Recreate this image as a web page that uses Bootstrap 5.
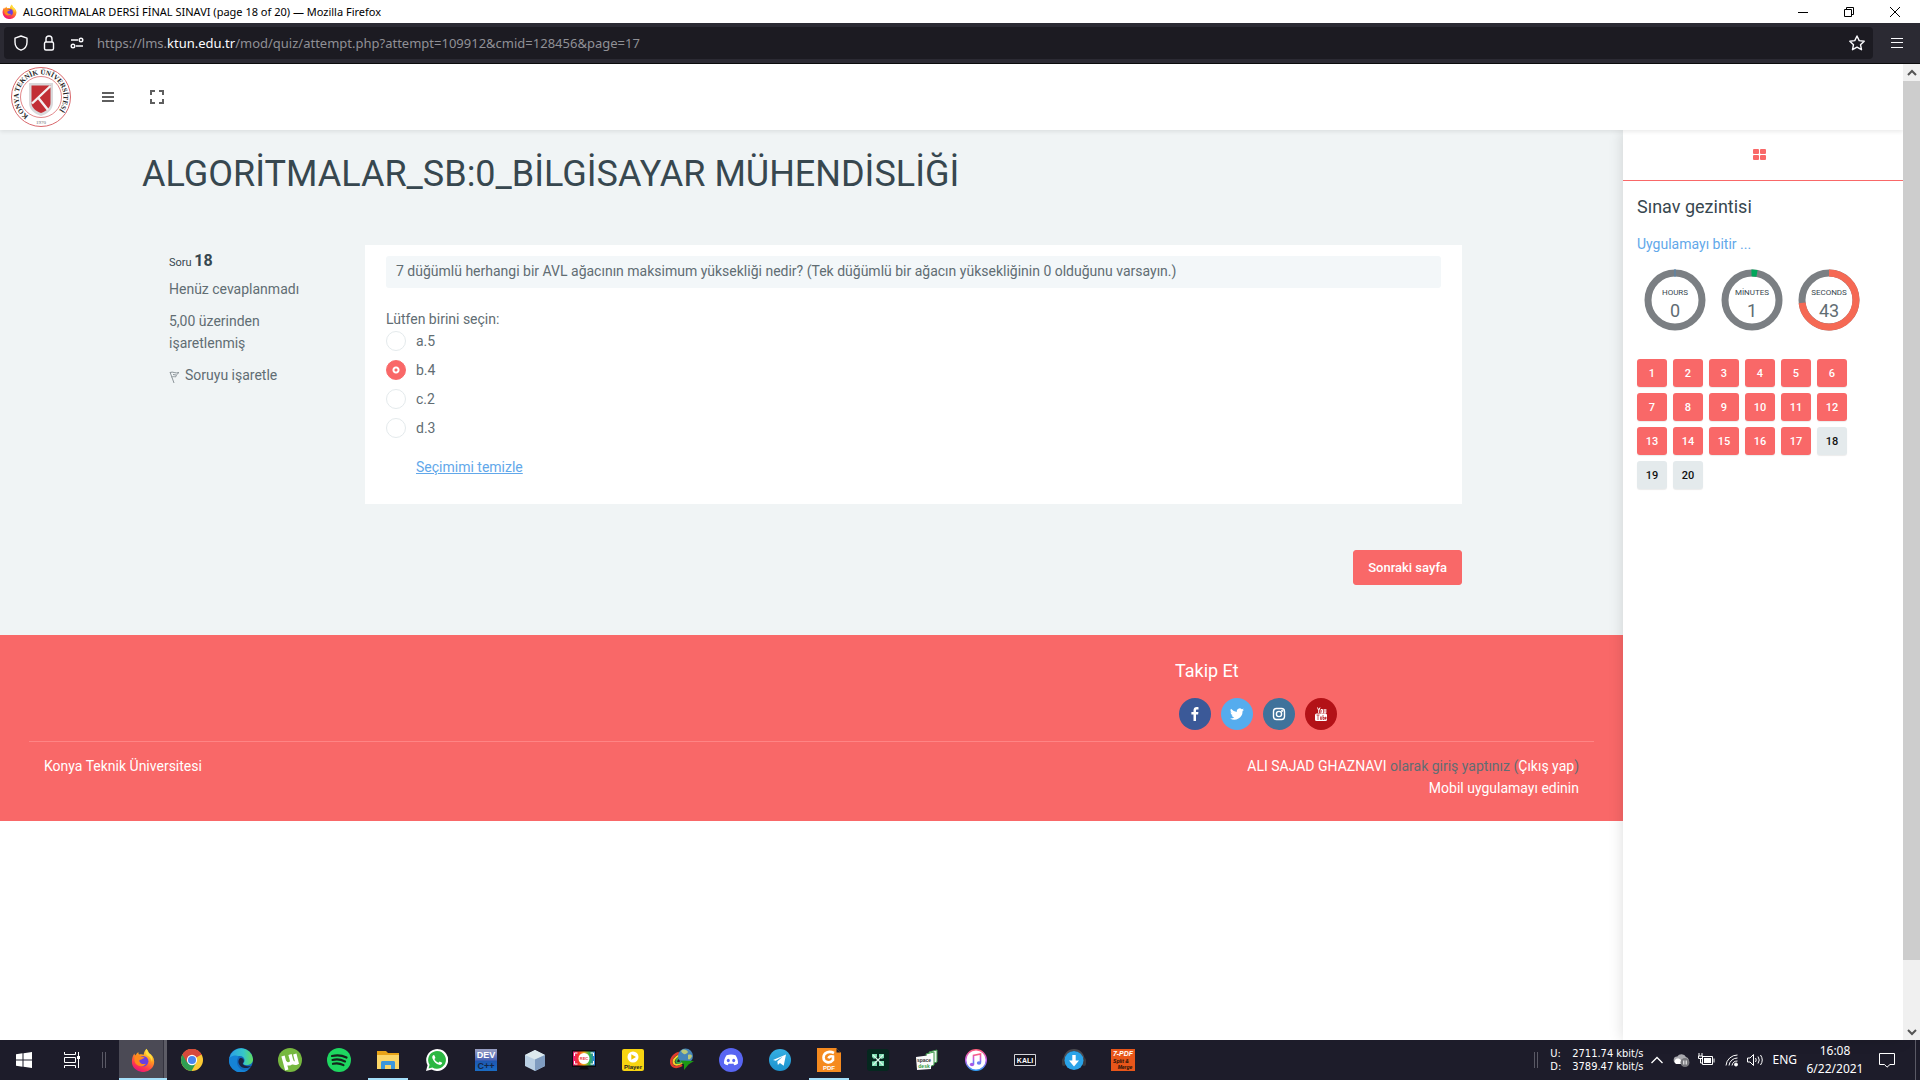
<!DOCTYPE html>
<html lang="tr">
<head>
<meta charset="utf-8">
<meta name="viewport" content="width=device-width, initial-scale=1">
<title>ALGORİTMALAR DERSİ FİNAL SINAVI (page 18 of 20)</title>
<link href="https://cdn.jsdelivr.net/npm/bootstrap@5.3.0/dist/css/bootstrap.min.css" rel="stylesheet">
<style>
:root { --coral: #f96868; --ink: #37474f; --text: #616d73; --sky: #62a8ea; }
body { font-family: Roboto, sans-serif; font-size: 14px; line-height: 22px; color: var(--text); background: #fff; }
svg { display: block; flex: none; }
.plain-btn { background: none; border: 0; padding: 0; color: inherit; }
.ui-font { font-family: "Noto Sans", "Open Sans", sans-serif; }
/* browser window */
.win-title { height: 23px; font-size: 11px; line-height: 22px; color: #000; padding: 0 2px 0 2px; }
.win-title span { margin-left: 6px; }
.win-btn { width: 46px; height: 23px; display: flex; align-items: center; justify-content: center; }
.win-tools { height: 41px; background: #2b2a33; border-bottom: 1px solid #0c0c0d; padding: 0 0 0 4px; color: #fbfbfe; }
.address { height: 32px; background: #1c1b22; border-radius: 4px; padding: 0 7px 0 9px; font-size: 13px; color: #909096; gap: 12px; }
.address strong { color: #fbfbfe; font-weight: 400; }
.menu-btn { width: 47px; height: 32px; display: flex; align-items: center; justify-content: center; }
/* page */
.site-head { height: 66px; padding-left: 11px; color: #5e5e5e; position: relative; z-index: 3; background: #fff; box-shadow: 0 2px 4px rgba(0,0,0,.08); }
.quiz-main { background: #f0f4f5; padding: 24px 161px 50px 142px; }
.quiz-main h1 { font-size: 36px; line-height: 40px; font-weight: 400; color: var(--ink); margin: 0 0 51px; }
.question { padding-left: 19px; }
.q-info { width: 204px; flex: none; padding: 5px 50px 0 8px; }
.q-info p { margin: 0 0 10px; }
.q-info h2 { font-size: 11px; line-height: 22px; font-weight: 400; color: var(--ink); margin: 0 0 4px; }
.q-info h2 b { font-size: 16px; }
.q-body { background: #fff; padding: 11px 21px 26px; }
.q-text { background: #f3f7f9; border-radius: 3px; padding: 4px 10px 6px; margin-bottom: 20px; }
.answer { display: flex; align-items: center; gap: 10px; margin-bottom: 7px; }
.answer .form-check-input { width: 20px; height: 20px; margin: 0; border: 1px solid #e4eaec; background-image: none; }
.answer .form-check-input:checked { border-color: var(--coral); background: radial-gradient(circle, var(--coral) 0 1px, #fff 2px 3px, var(--coral) 4px); }
.clear-link { display: inline-block; margin: 10px 0 0 30px; color: var(--sky); }
.next-btn { margin-top: 46px; height: 35px; padding: 0 14px; font-size: 13px; font-weight: 500; line-height: 22px; color: #fff; background: var(--coral); border: 1px solid var(--coral); border-radius: 3px; }
.site-foot { background: var(--coral); padding: 25px 29px 22px; }
.site-foot a { color: #fff; text-decoration: none; }
.follow { width: 419px; }
.follow h3 { font-size: 18px; line-height: 22px; font-weight: 400; color: #fff; margin: 0 0 16px; }
.social { display: flex; width: 32px; height: 32px; border-radius: 50%; align-items: center; justify-content: center; }
.foot-line { border-top: 1px solid #ff8484; margin-top: 11px; padding: 13px 15px 0; }
/* side panel */
.side { width: 280px; flex: none; background: #fff; box-shadow: 0 0 14px rgba(0,0,0,.14); position: relative; z-index: 2; }
.side-tab { height: 51px; border-bottom: 1px solid var(--coral); display: flex; justify-content: center; padding: 17px 7px 0 0; }
.side-body { padding: 15px 14px; }
.side-body h2 { font-size: 18px; line-height: 22px; font-weight: 400; color: var(--ink); margin: 0 0 15px; }
.side-body .finish { color: var(--sky); text-decoration: none; }
.dials { gap: 15px; margin: 14px 0 28px 7px; }
.dials text { font-family: Roboto, sans-serif; text-anchor: middle; }
.q-nav { display: flex; flex-wrap: wrap; gap: 6px; }
.q-nav a { width: 30px; height: 28px; border-radius: 3px; font-size: 11px; font-weight: 500; line-height: 29px; text-align: center; text-decoration: none; color: #fff; background: var(--coral); box-shadow: 0 1px 1px rgba(0,0,0,.08); }
.q-nav a.todo { color: #111; background: #e4eaec; }
.scroller { width: 17px; flex: none; background: #f0f0f0; position: relative; z-index: 4; }
.scroller button { height: 17px; width: 17px; display: flex; align-items: center; justify-content: center; }
.thumb { flex: 879 0 0; background: #cdcdcd; }
.track { flex: 63 0 0; }
/* taskbar */
.taskbar { height: 40px; flex: none; background: #1d1c2a; color: #fff; }
.tb { width: 49px; height: 40px; padding-right: 1px; position: relative; display: flex; align-items: center; justify-content: center; }
.tb-sys { width: 48px; padding-right: 0; }
.tb.active { background: linear-gradient(90deg, #4b4a55 44px, #34333f 44px 45px, #5d5c66 45px 48px, transparent 48px); }
.tb.open::after { content: ""; position: absolute; bottom: 0; left: 4px; width: 40px; height: 2px; background: #a5e0fa; }
.tb.active::after { left: 0; width: 48px; }
.grip { width: 4px; height: 16px; border: solid #5a5965; border-width: 0 1px; }
.speed { font-family: "DejaVu Sans Condensed", "DejaVu Sans", sans-serif; font-size: 11px; line-height: 13px; gap: 11px; }
.clock { font-size: 12px; line-height: 18px; text-align: center; width: 60px; }
.desk-edge { width: 5px; height: 40px; border-left: 1px solid #5a5965; }
.brand-text { font-family: "Liberation Sans", sans-serif; font-weight: 700; text-anchor: middle; }
</style>
<script src="https://cdn.jsdelivr.net/npm/bootstrap@5.3.0/dist/js/bootstrap.bundle.min.js"></script>
</head>
<body class="d-flex flex-column vh-100 overflow-hidden">
<svg width="0" height="0" class="position-absolute" aria-hidden="true">
  <defs>
    <linearGradient id="fxA" x1="0.8" y1="0" x2="0.3" y2="1"><stop offset="0" stop-color="#fff04a"/><stop offset=".4" stop-color="#ff9a1f"/><stop offset=".75" stop-color="#ff3b4c"/><stop offset="1" stop-color="#e8107c"/></linearGradient>
    <linearGradient id="edA" x1="0" y1="0" x2="1" y2="0"><stop offset="0" stop-color="#2b9fe6"/><stop offset=".6" stop-color="#36c6c9"/><stop offset="1" stop-color="#62de5c"/></linearGradient>
    <linearGradient id="itA" x1="0" y1="0" x2="0" y2="1"><stop offset="0" stop-color="#ff5e7c"/><stop offset=".5" stop-color="#c25bea"/><stop offset="1" stop-color="#2f9bf5"/></linearGradient>
    <linearGradient id="dvA" x1="0" y1="0" x2="0" y2="1"><stop offset="0" stop-color="#9aa0c4"/><stop offset=".5" stop-color="#4a63b4"/><stop offset=".55" stop-color="#1e57b0"/><stop offset="1" stop-color="#1a6cc4"/></linearGradient>
    <linearGradient id="rcA" x1="0" y1="0" x2="1" y2="0"><stop offset="0" stop-color="#e81c7c"/><stop offset=".25" stop-color="#f5372a"/><stop offset=".5" stop-color="#f7b316"/><stop offset=".75" stop-color="#2fb14c"/><stop offset="1" stop-color="#2c79e6"/></linearGradient>
    <linearGradient id="tgA" x1="0" y1="0" x2="0" y2="1"><stop offset="0" stop-color="#35afe3"/><stop offset="1" stop-color="#1c92cd"/></linearGradient>
    <symbol id="fox" viewBox="0 0 24 24">
      <path d="M15.500 .8c1.200 1.600 1.800 3 2.400 4.300 3 1.700 5.300 4.700 5.300 8.600a11.100 10.300 0 0 1-22.300 0c0-3.500 1-6.300 2.600-8.200.1 1 .3 1.600.7 2.200C5.200 6 6.300 4.800 7.400 4c-.1 1 .1 1.900.6 2.600 1.800-.6 3.400-.4 4.700.2.2-2.200 1.200-4.500 2.800-6z" fill="url(#fxA)"/>
      <circle cx="12.200" cy="13.300" r="5.200" fill="#6a3fe0"/>
      <path d="M4 7.500c2.500-.8 4.500-.1 5.800 1.300 1.600-.2 3 .2 3.900.9-1.500.3-3 1.700-4.500 2.100-1 .3-1 1.400-.3 2.400C10 16 12.500 16.600 15 15.700c-1.800 2.800-6.500 3.600-9.400.9C3.100 14.300 3 10.500 4 7.500z" fill="#ff8a1c"/>
      <path d="M15.500 1c1.200 1.600 1.800 3 2.400 4.300C20.500 7 22 10 21 14c-.4-3-2-5.500-5-6.800-1.500-1.800-1.600-4-.5-6.200z" fill="#ffdf3d"/>
    </symbol>
    <symbol id="up" viewBox="0 0 10 10"><path d="M1 7l4-4 4 4" fill="none" stroke="#555" stroke-width="2"/></symbol>
  </defs>
</svg>

<!-- window title -->
<div class="win-title ui-font d-flex align-items-center">
  <svg width="15" height="15"><use href="#fox"/></svg>
  <span class="flex-grow-1">ALGORİTMALAR DERSİ FİNAL SINAVI (page 18 of 20) — Mozilla Firefox</span>
  <button class="plain-btn win-btn" aria-label="Minimize"><svg width="10" height="10"><path d="M0 5.500h10" stroke="#000"/></svg></button>
  <button class="plain-btn win-btn" aria-label="Restore"><svg width="10" height="10" fill="none" stroke="#000"><path d="M.5 2.500h7v7h-7zM2.500 2.500v-2h7v7h-2"/></svg></button>
  <button class="plain-btn win-btn" aria-label="Close"><svg width="10" height="10"><path d="M0 0l10 10M10 0L0 10" stroke="#000"/></svg></button>
</div>

<!-- address bar -->
<div class="win-tools d-flex align-items-center">
  <div class="address ui-font d-flex align-items-center flex-grow-1">
    <svg width="16" height="16" fill="none" stroke="#fbfbfe" stroke-width="1.400"><path d="M8 1l6 2.200v4c0 4-2.700 6.800-6 8-3.300-1.200-6-4-6-8v-4z" stroke-linejoin="round"/></svg>
    <svg width="16" height="16" fill="none" stroke="#fbfbfe" stroke-width="1.400"><path d="M5 7V4a3 3 0 0 1 6 0v3"/><rect x="3.500" y="7" width="9" height="8" rx="1.500"/></svg>
    <svg width="16" height="16" fill="none" stroke="#fbfbfe" stroke-width="1.400"><path d="M2 5h7M7 11h7"/><circle cx="12" cy="5" r="1.800"/><circle cx="4" cy="11" r="1.800"/></svg>
    <span class="flex-grow-1">https://lms.<strong>ktun.edu.tr</strong>/mod/quiz/attempt.php?attempt=109912&amp;cmid=128456&amp;page=17</span>
    <button class="plain-btn" aria-label="Bookmark"><svg width="18" height="18" fill="none" stroke="#fbfbfe" stroke-width="1.400" stroke-linejoin="round"><path d="M9 2l2.200 4.600 5 .6-3.700 3.500 1 5L9 13.200l-4.500 2.500 1-5L1.800 7.200l5-.6z"/></svg></button>
  </div>
  <button class="plain-btn menu-btn" aria-label="Menu"><svg width="12" height="10" stroke="#fbfbfe"><path d="M0 .5h12M0 4.500h12M0 9.500h12"/></svg></button>
</div>

<div class="d-flex flex-grow-1" style="min-height:0">
  <div class="d-flex flex-column flex-grow-1">
    <header class="site-head d-flex align-items-center">
      <a href="#" aria-label="Konya Teknik Üniversitesi">
        <svg width="61" height="62" viewBox="0 0 61 62">
          <circle cx="30" cy="31" r="29.500" fill="#fff" stroke="#d9686c" stroke-width="1"/>
          <circle cx="30" cy="31" r="20.500" fill="none" stroke="#d9686c" stroke-width=".8"/>
          <path id="seal" d="M17.500 49.700A22.500 22.500 0 1 1 40 51.100" fill="none"/>
          <text font-family="Liberation Serif, serif" font-weight="700" font-size="7" fill="#222"><textPath href="#seal">KONYA TEKNİK ÜNİVERSİTESİ</textPath></text>
          <text x="30" y="58" text-anchor="middle" font-family="Liberation Serif, serif" font-size="5" fill="#666">1970</text>
          <path d="M18 17h24v20c0 6-5 11-12 13-7-2-12-7-12-13z" fill="#d9d9db"/>
          <path d="M20.500 19.500h19v17.500c0 4.500-4 8-9.500 10-5.500-2-9.500-5.500-9.500-10z" fill="#c22f35"/>
          <path d="M21 37.500L39.500 20M27 31.500L37 44" stroke="#f4f0f0" stroke-width="2.400"/>
        </svg>
      </a>
      <button class="plain-btn" style="margin-left:30px" aria-label="Menü"><svg width="12" height="10" stroke="#5e5e5e" stroke-width="2"><path d="M0 1h12M0 5h12M0 9h12"/></svg></button>
      <button class="plain-btn" style="margin-left:36px" aria-label="Tam ekran"><svg width="14" height="14" fill="none" stroke="#5e5e5e" stroke-width="2"><path d="M1 5V1h4M9 1h4v4M13 9v4H9M5 13H1V9"/></svg></button>
    </header>
    <div class="d-flex flex-grow-1">
      <div class="flex-grow-1">
        <main class="quiz-main">
          <h1>ALGORİTMALAR_SB:0_BİLGİSAYAR MÜHENDİSLİĞİ</h1>
          <form class="question">
            <div class="d-flex">
              <div class="q-info">
                <h2>Soru <b>18</b></h2>
                <p class="text-nowrap">Henüz cevaplanmadı</p>
                <p>5,00 üzerinden işaretlenmiş</p>
                <button type="button" class="plain-btn d-flex align-items-center text-nowrap gap-1"><svg width="12" height="12" class="mt-1" fill="none" stroke="#8b9499"><path d="M1 1l4 11M1 1.500c3-1.500 5 1.500 9 0-2 1-2.500 3-3.500 4.500-1.500-.5-2.500-.5-4 0M4 3.500l3 .5"/></svg>Soruyu işaretle</button>
              </div>
              <div class="q-body flex-grow-1">
                <div class="q-text">7 düğümlü herhangi bir AVL ağacının maksimum yüksekliği nedir? (Tek düğümlü bir ağacın yüksekliğinin 0 olduğunu varsayın.)</div>
                <div>Lütfen birini seçin:</div>
                <div class="answer"><input class="form-check-input" type="radio" name="q" id="qa"><label for="qa">a.5</label></div>
                <div class="answer"><input class="form-check-input" type="radio" name="q" id="qb" checked><label for="qb">b.4</label></div>
                <div class="answer"><input class="form-check-input" type="radio" name="q" id="qc"><label for="qc">c.2</label></div>
                <div class="answer"><input class="form-check-input" type="radio" name="q" id="qd"><label for="qd">d.3</label></div>
                <a href="#" class="clear-link">Seçimimi temizle</a>
              </div>
            </div>
            <div class="d-flex justify-content-end"><button type="button" class="next-btn">Sonraki sayfa</button></div>
          </form>
        </main>
        <footer class="site-foot">
          <div class="d-flex justify-content-end">
            <div class="follow">
              <h3>Takip Et</h3>
              <div class="d-flex ms-1" style="gap:10px">
                <a href="#" class="social" style="background:#3b5998" aria-label="Facebook"><svg width="14" height="14" fill="#fff"><path d="M10.500.2v2.200H9.200c-1 0-1.200.5-1.200 1.200v1.500h2.400L10.100 7.500H8V14H5.500V7.500H3.400V5.100h2.100V3.300C5.500 1.200 6.800 0 8.700 0c.9 0 1.600.1 1.800.2z"/></svg></a>
                <a href="#" class="social" style="background:#55acee" aria-label="Twitter"><svg width="14" height="14" viewBox="0 0 24 24" fill="#fff"><path d="M24 4.600a10 10 0 0 1-2.800.8 5 5 0 0 0 2.100-2.700 10 10 0 0 1-3.100 1.200 4.900 4.900 0 0 0-8.400 4.500A14 14 0 0 1 1.700 3.200a4.900 4.900 0 0 0 1.500 6.500 5 5 0 0 1-2.200-.6 4.900 4.900 0 0 0 3.900 4.900 5 5 0 0 1-2.200.1 4.900 4.900 0 0 0 4.600 3.400A9.900 9.900 0 0 1 0 19.500 14 14 0 0 0 21.500 7.100 10 10 0 0 0 24 4.600z"/></svg></a>
                <a href="#" class="social" style="background:#3f729b" aria-label="Instagram"><svg width="14" height="14" fill="none" stroke="#fff" stroke-width="1.400"><rect x="1.500" y="1.500" width="11" height="11" rx="3"/><circle cx="7" cy="7" r="2.600"/><circle cx="10.200" cy="3.900" r=".4"/></svg></a>
                <a href="#" class="social" style="background:#b31217" aria-label="YouTube"><svg width="14" height="14"><path d="M3.500.5l1.200 3v2.500M6 .5L4.700 3.500M7 2.500v3.500h1.500V2.500zM10.200 2v4h1.600V2" fill="none" stroke="#fff"/><rect x="1" y="6.500" width="12" height="7.500" rx="1.500" fill="#fff"/><path d="M2.500 8h3M4 8v5M6.500 9.500v3h1.200v-3M9 8v4.500h1.200v-2H9M11.200 10.200h1v1.300h-1zv2h1" fill="none" stroke="#b31217" stroke-width=".7"/></svg></a>
              </div>
            </div>
          </div>
          <div class="foot-line d-flex justify-content-between">
            <a href="#">Konya Teknik Üniversitesi</a>
            <div class="text-end">
              <div><a href="#">ALI SAJAD GHAZNAVI</a> olarak giriş yaptınız (<a href="#">Çıkış yap</a>)</div>
              <a href="#">Mobil uygulamayı edinin</a>
            </div>
          </div>
        </footer>
      </div>
      <aside class="side">
        <div class="side-tab"><svg width="14" height="14" fill="#f96868"><rect y="2" width="6" height="5" rx="1"/><rect x="7" y="2" width="6" height="5" rx="1"/><rect y="8" width="6" height="5" rx="1"/><rect x="7" y="8" width="6" height="5" rx="1"/></svg></div>
        <div class="side-body">
          <h2>Sınav gezintisi</h2>
          <a href="#" class="finish">Uygulamayı bitir ...</a>
          <div class="dials d-flex">
            <svg width="62" height="62"><circle cx="31" cy="31" r="27" fill="none" stroke="#7b7f83" stroke-width="7"/><path d="M31 0v8" stroke="#4f87b8"/><text x="31" y="26" font-size="8" fill="#37474f">HOURS</text><text x="31" y="48" font-size="18" fill="#616d73">0</text></svg>
            <svg width="62" height="62"><circle cx="31" cy="31" r="27" fill="none" stroke="#7b7f83" stroke-width="7"/><path d="M30.500 4a27 27 0 0 1 5.500.400" fill="none" stroke="#00a65a" stroke-width="7"/><text x="31" y="26" font-size="8" fill="#37474f">MİNUTES</text><text x="31" y="48" font-size="18" fill="#616d73">1</text></svg>
            <svg width="62" height="62"><circle cx="31" cy="31" r="27" fill="none" stroke="#7b7f83" stroke-width="7"/><path d="M31 4a27 27 0 1 1-26.900 29.800" fill="none" stroke="#f56954" stroke-width="7"/><text x="31" y="26" font-size="8" fill="#37474f">SECONDS</text><text x="31" y="48" font-size="18" fill="#616d73">43</text></svg>
          </div>
          <nav class="q-nav" style="width:212px" aria-label="Sorular">
            <a href="#">1</a><a href="#">2</a><a href="#">3</a><a href="#">4</a><a href="#">5</a><a href="#">6</a>
            <a href="#">7</a><a href="#">8</a><a href="#">9</a><a href="#">10</a><a href="#">11</a><a href="#">12</a>
            <a href="#">13</a><a href="#">14</a><a href="#">15</a><a href="#">16</a><a href="#">17</a><a href="#" class="todo">18</a>
            <a href="#" class="todo">19</a><a href="#" class="todo">20</a>
          </nav>
        </div>
      </aside>
    </div>
  </div>
  <div class="scroller d-flex flex-column">
    <button class="plain-btn" aria-label="Scroll up"><svg width="10" height="10"><use href="#up"/></svg></button>
    <div class="thumb"></div><div class="track"></div>
    <button class="plain-btn" aria-label="Scroll down"><svg width="10" height="10" style="transform:rotate(180deg)"><use href="#up"/></svg></button>
  </div>
</div>

<!-- taskbar -->
<div class="taskbar ui-font d-flex align-items-center">
  <button class="plain-btn tb tb-sys" aria-label="Start"><svg width="16" height="16" fill="#fff"><path d="M0 2.200L6.500 1.300V7.500H0zM7.500 1.200L16 0v7.500H7.500zM0 8.500h6.500v6.200L0 13.800zM7.500 8.500H16V16l-8.500-1.200z"/></svg></button>
  <button class="plain-btn tb tb-sys" aria-label="Task view"><svg width="17" height="16" fill="none" stroke="#fff"><path d="M.5 0v2.500h11V0M.5 5.500h11v5h-11zM.5 16v-2.500h11V16M14.500 0v16"/><path d="M13 4h3v3h-3z" fill="#fff" stroke="none"/></svg></button>
  <div class="d-flex" style="width:23px;padding-left:6px"><span class="grip"></span></div>
  <button class="plain-btn tb open active" aria-label="Firefox"><svg width="24" height="24"><use href="#fox"/></svg></button>
  <button class="plain-btn tb" aria-label="Chrome"><svg width="22" height="22" viewBox="0 0 24 24"><circle cx="12" cy="12" r="12" fill="#fbc934"/><path d="M12 12L1.600 6A12 12 0 0 1 22.400 6z" fill="#d64a3c"/><path d="M1.600 6A12 12 0 0 0 11.500 24l5.200-9.300L12 12z" fill="#2f9e52"/><path d="M12 6.500h10.600A12 12 0 0 0 1.600 6l5.200 9z" fill="#d64a3c"/><circle cx="12" cy="12" r="5.600" fill="#fff"/><circle cx="12" cy="12" r="4.400" fill="#4a86ee"/></svg></button>
  <button class="plain-btn tb" aria-label="Edge"><svg width="24" height="24"><circle cx="12" cy="12" r="12" fill="#1269bd"/><path d="M.3 10A12 12 0 0 1 24 11c.2 3.500-2.300 6-6 6-3 0-4.500-1.200-3.200-2.600 2-2.400.2-6.400-4.300-6.400C5 8 1 10.500.3 10z" fill="url(#edA)"/><path d="M10 8.500c-3 3-3 9 1.500 12.500 2.500 1.800 6 1.900 9.500-.7A12 12 0 0 1 .1 10.500C3 7 7 7 10 8.500z" fill="#1583d6"/><path d="M10.500 10.500c-2.500 3-.5 8 4 9.300 3 .8 6-.2 8-1.800-3 .5-6.500.3-8.300-1.500-.8-.8-.2-1.600.3-2.300.6-1 .5-2.500-.5-3.500-1-.8-2.500-.9-3.500-.2z" fill="#1c2140"/></svg></button>
  <button class="plain-btn tb" aria-label="uTorrent"><svg width="24" height="24"><circle cx="12" cy="12" r="12" fill="#76b83f"/><path d="M5 8l3.800 14M6.800 13.500c1 3 6 3.500 7-.2L12 6.500M13.500 12c.8 3 3 3.800 5.500 2.800L16.800 6" fill="none" stroke="#fff" stroke-width="3.400"/></svg></button>
  <button class="plain-btn tb" aria-label="Spotify"><svg width="24" height="24"><circle cx="12" cy="12" r="12" fill="#1ed760"/><path d="M5 8c5-1.300 10-.8 14.500 1.500M5.500 12c4.200-1.200 8.500-.6 12.500 1.400M6 15.800c3.800-.9 7-.6 10.500 1.300" fill="none" stroke="#14231b" stroke-width="2.200" stroke-linecap="round"/></svg></button>
  <button class="plain-btn tb open" aria-label="Explorer"><svg width="22" height="20"><path d="M0 1h9l2 2h11v15H0z" fill="#e8a317"/><path d="M0 5h22v14H0z" fill="#fcd667"/><path d="M4 19v-6.500c0-1 .7-1.500 1.500-1.500h11c.8 0 1.500.5 1.500 1.500V19h-4v-4H8v4z" fill="#3d97dc"/></svg></button>
  <button class="plain-btn tb" aria-label="WhatsApp"><svg width="22" height="22" viewBox="0 0 24 24"><path d="M0 24l1.700-6.200A12 12 0 1 1 6.200 22.400z" fill="#fff"/><path d="M2.800 21.200l1.100-4A9.700 9.700 0 1 1 7 20.200z" fill="#2cb742"/><path d="M8.500 6.500c-1.500.5-2 2-1.500 3.500 1.200 3.500 4 6.300 7.500 7.300 1.500.3 3-.5 3.200-2.300l-2.800-1.400-1.400 1.500c-2-.8-3.500-2.300-4.300-4.100l1.100-1.300-1-2.700z" fill="#fff"/></svg></button>
  <button class="plain-btn tb" aria-label="Dev C++"><svg width="22" height="22"><path d="M0 0h22v22H0z" fill="url(#dvA)"/><text class="brand-text" x="11" y="9" font-size="9" fill="#fff">DEV</text><text class="brand-text" x="11" y="20" font-size="9" fill="#152543">C++</text></svg></button>
  <button class="plain-btn tb" aria-label="VirtualBox"><svg width="22" height="22"><path d="M11 1l10 5v11l-10 5L1 17V6z" fill="#b9cfe3"/><path d="M11 1l10 5-10 4.500L1 6z" fill="#dce9ee"/><path d="M11 10.500L21 6v11l-10 5z" fill="#7f9cc0"/></svg></button>
  <button class="plain-btn tb" aria-label="Recorder"><svg width="24" height="20"><path d="M0 0h24v17H0z" fill="#0b0b10"/><path d="M7 19.500h10l-2-3H9z" fill="#0b0b10"/><path d="M1 1.500h22v14H1z" fill="url(#rcA)"/><path d="M2.500 6V3h3M18.500 3h3v3M21.500 11v3h-3M5.500 14h-3v-3" fill="none" stroke="#fff"/><circle cx="12" cy="8.500" r="5.500" fill="#fff"/><text class="brand-text" x="12" y="10" font-size="4" fill="#e8343a">REC</text></svg></button>
  <button class="plain-btn tb" aria-label="Player"><svg width="22" height="22"><rect width="22" height="22" rx="2" fill="#f7d411"/><circle cx="11" cy="8" r="5.500" fill="#fff"/><path d="M9.300 5.200L14 8l-4.700 2.800z" fill="#f0c400"/><text class="brand-text" x="11" y="20" font-size="6" fill="#222">Player</text></svg></button>
  <button class="plain-btn tb" aria-label="IDM"><svg width="24" height="24"><path d="M9 5C2 7-1 14 3 18c2 1.500 6 1 9-1" fill="none" stroke="#e23b2c" stroke-width="2.500"/><path d="M10 7C5 9 2 13 4.500 16c1.500 1 5 .5 8-1.500" fill="none" stroke="#f6cf2b" stroke-width="2"/><path d="M10 9c-3 1.500-4.500 4-3.500 5.500 1 .8 3 .5 5-.5" fill="none" stroke="#38a94a" stroke-width="2"/><circle cx="15.500" cy="8" r="7.500" fill="#4585b8"/><path d="M11 3c3-3 6-1 7 1-2 3-5 3-7-1zM18 7c2-1 4 0 4 1-1 3-3 4-4 3z" fill="#b9c97a"/><path d="M10 12.500l14 .5-5.500 3.500L14 22v-5.500z" fill="#1c9a14"/></svg></button>
  <button class="plain-btn tb" aria-label="Discord"><svg width="24" height="24"><circle cx="12" cy="12" r="12" fill="#5865f2"/><path d="M7.500 7.200c3-1 6-1 9 0 1.800 2.600 2.700 5.400 2.500 8.300-1.200 1-2.400 1.500-3.700 1.700l-1-1.600c-1.600.3-3 .3-4.600 0l-1 1.600c-1.300-.2-2.500-.7-3.700-1.700-.2-2.900.7-5.700 2.500-8.300z" fill="#fff"/><ellipse cx="9.300" cy="12.500" rx="1.500" ry="1.700" fill="#5865f2"/><ellipse cx="14.700" cy="12.500" rx="1.500" ry="1.700" fill="#5865f2"/></svg></button>
  <button class="plain-btn tb" aria-label="Telegram"><svg width="22" height="22"><circle cx="11" cy="11" r="11" fill="url(#tgA)"/><path d="M4 11l13-5.500-2.300 11.300-3.800-2.800-2 2-.6-3.600 5.500-5-7 4.300z" fill="#fff"/></svg></button>
  <button class="plain-btn tb open" aria-label="PDF"><svg width="24" height="24"><path d="M0 0h19l5 5v19H0z" fill="#f58a1f"/><path d="M19 0v5h5" fill="#1d1c2a" stroke="#f58a1f"/><path d="M17 5c-5-2.500-10.500-.5-10.500 4.500 0 5 6.500 6.500 9.500 2.500V8.500c-2-.8-4 0-4.500 1.800" fill="none" stroke="#fff" stroke-width="2.600"/><text class="brand-text" x="12" y="22" font-size="6" fill="#fff">PDF</text></svg></button>
  <button class="plain-btn tb" aria-label="Editor"><svg width="22" height="22"><rect width="22" height="22" rx="3" fill="#05281f"/><path d="M5 5h5v3l-3 2-2-2zM12 5h5v4l-2.500 1-2.500-2zM5 12.500l4-.5 1 2v3H5zM12 12h5v5h-5z" fill="#7fe0b4"/><path d="M6 6l10 10M16 6L6 16" stroke="#d9f7ea" stroke-width="1.200"/></svg></button>
  <button class="plain-btn tb" aria-label="Spacedesk"><svg width="24" height="22"><path d="M14 3l8-2v12l-6 2z" fill="#e8f3e8" stroke="#3f9a4c"/><path d="M11 5l8-2v13l-5 2z" fill="#fff" stroke="#3f9a4c"/><path d="M1 8l15-2v14L2 21z" fill="#fafafa"/><text class="brand-text" x="9" y="13" font-size="5" fill="#333">space</text><text class="brand-text" x="9" y="19" font-size="5" fill="#2f9a45">desk</text></svg></button>
  <button class="plain-btn tb" aria-label="iTunes"><svg width="22" height="22"><circle cx="11" cy="11" r="10.300" fill="#fff" stroke="url(#itA)" stroke-width="1.400"/><path d="M8.500 15V6.500L15.500 5v8.500" fill="none" stroke="url(#itA)" stroke-width="1.600"/><ellipse cx="7" cy="15.500" rx="2.200" ry="1.700" fill="#a55bea"/><ellipse cx="14" cy="14" rx="2.200" ry="1.700" fill="#6a7bf0"/></svg></button>
  <button class="plain-btn tb" aria-label="Kali"><svg width="22" height="12"><path d="M.5 .5h21v11H.500z" fill="#15141f" stroke="#d5d5da"/><text class="brand-text" x="11" y="9" font-size="7" fill="#fff">KALI</text></svg></button>
  <button class="plain-btn tb" aria-label="Downloader"><svg width="24" height="22"><path d="M2 13C2-3 22-3 22 13" fill="none" stroke="#4b4b50" stroke-width="2"/><rect y="9" width="4" height="8" rx="2" fill="#3a3a3e"/><rect x="20" y="9" width="4" height="8" rx="2" fill="#3a3a3e"/><circle cx="12" cy="11.500" r="9.500" fill="#2aa3e8"/><path d="M10.300 6h3.400v5.500H17l-5 6-5-6h3.300z" fill="#fff"/></svg></button>
  <button class="plain-btn tb" aria-label="7-PDF"><svg width="24" height="24"><path d="M0 1h24v22H0z" fill="#e8561a"/><g font-style="italic"><text class="brand-text" x="12" y="8" font-size="7" fill="#fff">7-PDF</text><text class="brand-text" x="10" y="15" font-size="5" fill="#201008">Split &amp;</text><text class="brand-text" x="14" y="21" font-size="5" fill="#201008">Merge</text></g></svg></button>

  <div class="d-flex align-items-center ms-auto">
    <span class="grip"></span>
    <div class="speed d-flex" style="margin-left:12px"><div>U:<br>D:</div><div>2711.74 kbit/s<br>3789.47 kbit/s</div></div>
    <button class="plain-btn" style="margin-left:8px" aria-label="Hidden icons"><svg width="12" height="8" fill="none" stroke="#fff" stroke-width="1.300"><path d="M.5 7L6 1.500 11.500 7"/></svg></button>
    <svg width="17" height="14" style="margin-left:10px"><path d="M4 10.500a3.500 3.500 0 0 1 .3-7A5 5 0 0 1 13 4a3.500 3.500 0 0 1 1 6.500z" fill="#a9a9ae"/><path d="M3 11a3 3 0 0 1 0-5c2-1 4 0 5 1v4z" fill="#fff"/><circle cx="12" cy="9.500" r="4.500" fill="#77777c"/><path d="M10.800 7.500v4M13.200 7.500v4" stroke="#fff"/></svg>
    <svg width="17" height="14" style="margin-left:8px" fill="none" stroke="#fff"><path d="M4.500 3.500h10v8h-10zM16 5.500v4M1 0v3M4 0v3M.5 3h4v2.500h-4zM2.500 5v5h2"/><path d="M6 5h7v5H6z" fill="#fff" stroke="none"/></svg>
    <svg width="14" height="14" style="margin-left:10px" fill="none" stroke="#fff"><path d="M1 12.500A11.500 11.500 0 0 1 12.500 2M4 12.500A8.500 8.500 0 0 1 12.500 5M7 12.500A5.500 5.500 0 0 1 12.500 8" /><circle cx="11" cy="11.500" r="1.500" fill="#fff"/></svg>
    <svg width="17" height="14" style="margin-left:8px" fill="none" stroke="#fff"><path d="M.5 5h2.500L6.500 1.500v11L3 9H.5zM8.500 5q1.500 2 0 4M11 3.500q2.500 3.500 0 7M13.500 2q3.500 5 0 10"/></svg>
    <span style="margin-left:8px;font-size:12px">ENG</span>
    <div class="clock" style="margin-left:8px">16:08<br>6/22/2021</div>
    <button class="plain-btn" style="margin:0 20px 0 14px" aria-label="Notifications"><svg width="16" height="16" fill="none" stroke="#fff"><path d="M.5 1.500h15v11H11L8 15.200 5.500 12.500h-5z"/></svg></button>
    <span class="desk-edge"></span>
  </div>
</div>
</body>
</html>
